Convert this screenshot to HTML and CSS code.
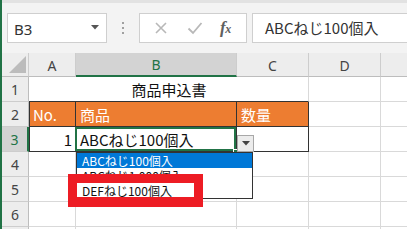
FILE: index.html
```html
<!DOCTYPE html>
<html lang="ja">
<head>
<meta charset="utf-8">
<link rel="stylesheet" href="styles.css">
</head>
<body>
<div class="app">
  <div class="toolbar">
    <div class="namebox">
      <span>B3</span>
      <svg class="caret" width="8" height="5" viewBox="0 0 8 5"><path d="M0 0h8L4 4.5z" fill="#555"/></svg>
    </div>
    <div class="sep"><i></i><i></i><i></i></div>
    <div class="fnbox">
      <svg class="ico" width="14" height="14" viewBox="0 0 14 14"><path d="M2 2L12 12M12 2L2 12" stroke="#b8b8b8" stroke-width="1.6" fill="none"/></svg>
      <svg class="ico" width="16" height="14" viewBox="0 0 16 14"><path d="M1.5 7.5L6 12L14.5 2" stroke="#b8b8b8" stroke-width="1.8" fill="none"/></svg>
      <span class="fx"><i>f</i><i class="x">x</i></span>
    </div>
    <div class="formula">ABCねじ100個入</div>
  </div>
  <div class="sheet">
    <div class="grid">
      <div class="ch corner"><svg width="17" height="17" viewBox="0 0 17 17"><path d="M17 0V17H0z" fill="#bcbcbc"/></svg></div>
      <div class="ch">A</div>
      <div class="ch sel">B</div>
      <div class="ch">C</div>
      <div class="ch">D</div>
      <div class="ch last"></div>

      <div class="rh">1</div>
      <div class="c title">商品申込書</div>
      <div class="c"></div>
      <div class="c"></div>

      <div class="rh">2</div>
      <div class="c hd tl">No.</div>
      <div class="c hd tb">商品</div>
      <div class="c hd tb">数量</div>
      <div class="c"></div>
      <div class="c"></div>

      <div class="rh sel">3</div>
      <div class="c tl num">1</div>
      <div class="c tb active">ABCねじ100個入</div>
      <div class="c tb"></div>
      <div class="c"></div>
      <div class="c"></div>

      <div class="rh">4</div>
      <div class="c"></div><div class="c"></div><div class="c"></div><div class="c"></div><div class="c"></div>
      <div class="rh">5</div>
      <div class="c"></div><div class="c"></div><div class="c"></div><div class="c"></div><div class="c"></div>
      <div class="rh">6</div>
      <div class="c"></div><div class="c"></div><div class="c"></div><div class="c"></div><div class="c"></div>
      <div class="rh"></div>
      <div class="c"></div><div class="c"></div><div class="c"></div><div class="c"></div><div class="c"></div>
    </div>

    <div class="handle"></div>
    <div class="ddbtn"><svg width="8" height="5" viewBox="0 0 8 5"><path d="M0 0h8L4 4.5z" fill="#444"/></svg></div>
    <div class="ddlist">
      <div class="item hi">ABCねじ100個入</div>
      <div class="item">ABCねじ1,000個入</div>
      <div class="item">DEFねじ100個入</div>
    </div>
    <div class="mark"></div>
  </div>
</div>
</body>
</html>
```

FILE: styles.css
```css
* { box-sizing: border-box; }
html, body {
  margin: 0;
  padding: 0;
  width: 407px;
  height: 229px;
  overflow: hidden;
  background: #ffffff;
}
body {
  font-family: "Noto Sans", "Noto Sans CJK JP", sans-serif;
}
.app {
  width: 407px;
  height: 229px;
  border-left: 2px solid #217346;
  display: flex;
  flex-direction: column;
  background: #f3f3f3;
  overflow: hidden;
}
.toolbar {
  flex: none;
  height: 53px;
  border-top: 3px solid #e2e2e2;
  padding: 10px 0 0 5px;
  display: flex;
  align-items: flex-start;
  background: #f3f3f3;
}
.namebox {
  flex: none;
  width: 100px;
  height: 30px;
  background: #fff;
  border: 1px solid #cfcfcf;
  display: flex;
  align-items: center;
  justify-content: space-between;
  padding: 2px 7px 0 6px;
  font-size: 15px;
  color: #333;
}
.caret { margin-top: -3px; }
.sep {
  flex: none;
  width: 32px;
  height: 30px;
  display: flex;
  flex-direction: column;
  align-items: center;
  justify-content: center;
  gap: 3px;
}
.sep i {
  display: block;
  width: 2px;
  height: 2px;
  background: #a0a0a0;
}
.fnbox {
  flex: none;
  width: 108px;
  height: 30px;
  background: #fff;
  border: 1px solid #cfcfcf;
  display: flex;
  align-items: center;
  padding: 0 0 0 14px;
  gap: 19px;
}
.fx {
  font-family: "Liberation Serif", serif;
  font-style: italic;
  font-weight: bold;
  color: #606060;
  font-size: 17px;
  margin-left: -2px;
  letter-spacing: -0.5px;
}
.fx i { font-style: italic; }
.fx .x { font-size: 12px; }
.formula {
  flex: none;
  margin-left: 5px;
  width: 170px;
  height: 30px;
  background: #fff;
  border: 1px solid #cfcfcf;
  border-right: none;
  padding: 3px 0 0 12px;
  font-family: "Noto Sans CJK JP", sans-serif;
  font-size: 15px;
  color: #333;
  line-height: 22px;
}
.sheet {
  position: relative;
  flex: 1;
  background: #fff;
}
.grid {
  display: grid;
  grid-template-columns: 27px 47px 161px 72px 72px 40px;
  grid-template-rows: 24px repeat(7, 25px);
}
.ch {
  background: #ededed;
  border-right: 1px solid #cdcdcd;
  border-bottom: 1px solid #bdbdbd;
  display: flex;
  align-items: center;
  justify-content: center;
  font-size: 14px;
  color: #444;
  padding-top: 1px;
}
.ch.corner {
  align-items: flex-end;
  justify-content: flex-end;
  padding: 0 2px 3px 0;
}
.ch.sel {
  background: #d3d3d3;
  color: #217346;
  border-bottom: 2px solid #217346;
}
.rh {
  background: #ededed;
  border-right: 1px solid #bdbdbd;
  border-bottom: 1px solid #cdcdcd;
  display: flex;
  align-items: center;
  justify-content: center;
  font-size: 14px;
  color: #444;
}
.rh.sel {
  background: #d3d3d3;
  color: #217346;
  border-right: 2px solid #217346;
}
.c {
  border-right: 1px solid #d9d9d9;
  border-bottom: 1px solid #d9d9d9;
  display: flex;
  align-items: center;
  padding: 1px 3px 0 4px;
  font-family: "Noto Sans CJK JP", sans-serif;
  font-size: 15px;
  color: #111;
  white-space: nowrap;
}
.c.title {
  grid-column: span 3;
  justify-content: center;
  border-bottom: 1px solid #333;
}
.c.hd {
  background: #ed7d31;
  color: #fff;
}
.c.tl {
  border-left: 1px solid #333;
  border-right: 1px solid #333;
  border-bottom: 1px solid #333;
  padding-left: 3px;
}
.c.tb {
  border-right: 1px solid #333;
  border-bottom: 1px solid #333;
}
.c.num { justify-content: flex-end; }
.c.active {
  box-shadow: inset 0 0 0 2px #217346;
  margin-left: -1px;
  padding-left: 5px;
}
.handle {
  position: absolute;
  left: 231px;
  top: 96px;
  width: 6px;
  height: 6px;
  background: #217346;
  border: 1px solid #fff;
}
.ddbtn {
  position: absolute;
  left: 235px;
  top: 82px;
  width: 17px;
  height: 17px;
  background: #ececec;
  border: 1px solid #a8a8a8;
  display: flex;
  align-items: center;
  justify-content: center;
}
.ddlist {
  position: absolute;
  left: 74px;
  top: 99px;
  width: 177px;
  height: 47px;
  background: #fff;
  border: 1px solid #333;
}
.item {
  height: 15px;
  line-height: 15px;
  padding-left: 5px;
  font-family: "Noto Sans CJK JP", sans-serif;
  font-size: 12px;
  color: #111;
  white-space: nowrap;
  overflow: hidden;
}
.item.hi {
  background: #0078d7;
  color: #fff;
}
.mark {
  position: absolute;
  left: 66px;
  top: 121px;
  width: 135px;
  height: 33px;
  border: 9px solid #ed1c24;
  border-bottom-width: 10px;
}
```
